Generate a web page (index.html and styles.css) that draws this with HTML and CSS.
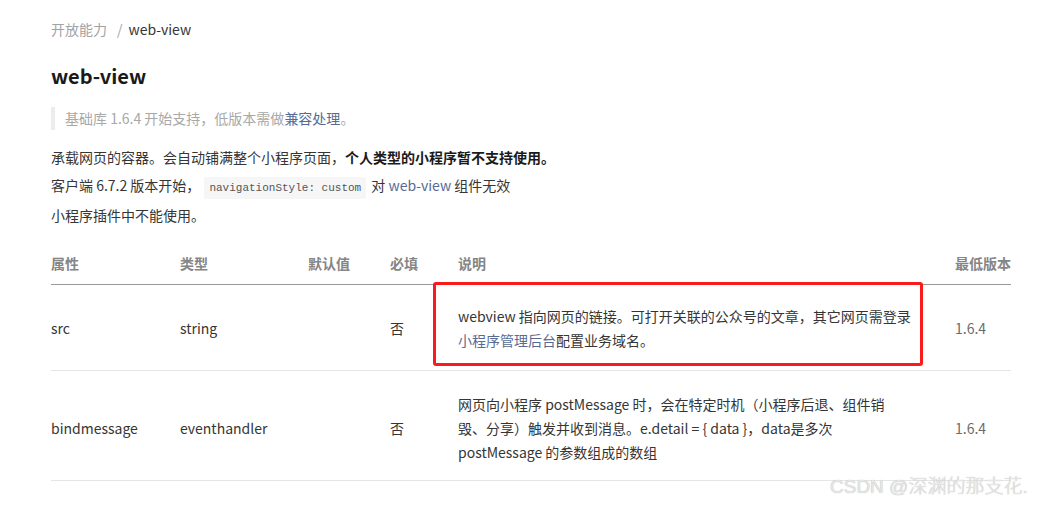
FILE: index.html
```html
<!DOCTYPE html>
<html lang="zh-CN">
<head>
<meta charset="utf-8">
<title>web-view</title>
<link rel="stylesheet" href="styles.css">
</head>
<body>
<div class="page">
  <div class="crumb"><span class="crumb-parent">开放能力</span><span class="crumb-sep">/</span><span class="crumb-cur">web-view</span></div>
  <h1 class="title">web-view</h1>
  <blockquote class="tip">基础库 1.6.4 开始支持，低版本需做<a class="link">兼容处理</a>。</blockquote>
  <p class="para p1">承载网页的容器。会自动铺满整个小程序页面，<strong>个人类型的小程序暂不支持使用。</strong></p>
  <p class="para p2">客户端 6.7.2 版本开始，<code class="code">navigationStyle: custom</code> 对 <a class="link">web-view</a> 组件无效</p>
  <p class="para p3">小程序插件中不能使用。</p>
  <div class="table-wrap">
    <table class="props">
      <colgroup>
        <col class="c1"><col class="c2"><col class="c3"><col class="c4"><col class="c5"><col class="c6">
      </colgroup>
      <thead>
        <tr><th>属性</th><th>类型</th><th>默认值</th><th>必填</th><th>说明</th><th>最低版本</th></tr>
      </thead>
      <tbody>
        <tr class="row-src">
          <td>src</td><td>string</td><td></td><td>否</td>
          <td class="desc">webview 指向网页的链接。可打开关联的公众号的文章，其它网页需登录<a class="link">小程序管理后台</a>配置业务域名。</td>
          <td class="ver">1.6.4</td>
        </tr>
        <tr class="row-msg">
          <td>bindmessage</td><td>eventhandler</td><td></td><td>否</td>
          <td class="desc">网页向小程序 postMessage 时，会在特定时机（小程序后退、组件销毁、分享）触发并收到消息。e.detail = { data }，data是多次 postMessage 的参数组成的数组</td>
          <td class="ver">1.6.4</td>
        </tr>
      </tbody>
    </table>
    <div class="mark"></div>
  </div>
</div>
<div class="watermark">CSDN @深渊的那支花.</div>
</body>
</html>
```

FILE: styles.css
```css
html, body {
  margin: 0;
  padding: 0;
  background: #fff;
}
body {
  font-family: "Noto Sans CJK SC", "Noto Sans", sans-serif;
  font-size: 14px;
  color: #353535;
  position: relative;
  width: 1041px;
  height: 505px;
  overflow: hidden;
}
.page {
  padding: 19px 30px 0 51px;
}
.crumb {
  line-height: 20px;
  height: 20px;
}
.crumb-parent { color: #a3a3a3; }
.crumb-sep { color: #a3a3a3; margin: 0 6px 0 10px; }
.crumb-cur { color: #353535; }
.title {
  margin: 23px 0 0;
  font-size: 20px;
  line-height: 28px;
  font-weight: 700;
  color: #1a1a1a;
}
.tip {
  margin: 17px 0 0;
  padding: 0 0 0 10px;
  border-left: 4px solid #ececec;
  line-height: 23px;
  color: #a8a8a8;
}
.link {
  color: #576b95;
  text-decoration: none;
}
.para {
  margin: 0;
  line-height: 28px;
  height: 28px;
}
.p1 { margin-top: 13px; }
.p3 { margin-top: 2px; }
.para strong { font-weight: 700; color: #1a1a1a; }
.code {
  font-family: "Liberation Mono", monospace;
  font-size: 11px;
  line-height: 1;
  background: #f6f6f6;
  color: #555;
  padding: 5px 5px;
  margin: 0 2px 0 4px;
  border-radius: 2px;
}
.table-wrap {
  position: relative;
  margin-top: 10px;
  width: 960px;
}
.props {
  width: 960px;
  border-collapse: collapse;
  table-layout: fixed;
}
.c1 { width: 129px; }
.c2 { width: 128px; }
.c3 { width: 82px; }
.c4 { width: 68px; }
.c5 { width: 497px; }
.c6 { width: 56px; }
.props th {
  text-align: left;
  font-weight: 700;
  color: #858585;
  padding: 12px 0 9px;
  line-height: 24px;
  border-bottom: 1px solid #999;
}
.props td {
  padding: 19px 0 18px;
  line-height: 24px;
  vertical-align: middle;
  border-bottom: 1px solid #e5e5e5;
  color: #353535;
}
.props .row-msg td {
  padding: 21px 0 16px;
}
.props td.desc {
  padding-right: 43px;
}
.props td.ver {
  color: #6b6b6b;
}
.mark {
  position: absolute;
  left: 382px;
  top: 43px;
  width: 484px;
  height: 78px;
  border: 3px solid #fa1c1c;
  border-radius: 3px;
}
.watermark {
  position: absolute;
  left: 830px;
  top: 474px;
  font-family: "Liberation Sans", "Noto Sans CJK SC", sans-serif;
  font-size: 19px;
  line-height: 26px;
  font-weight: 300;
  color: #e6e6e6;
  text-shadow: 0 0 1px #b0b0b0;
  white-space: nowrap;
}
```
